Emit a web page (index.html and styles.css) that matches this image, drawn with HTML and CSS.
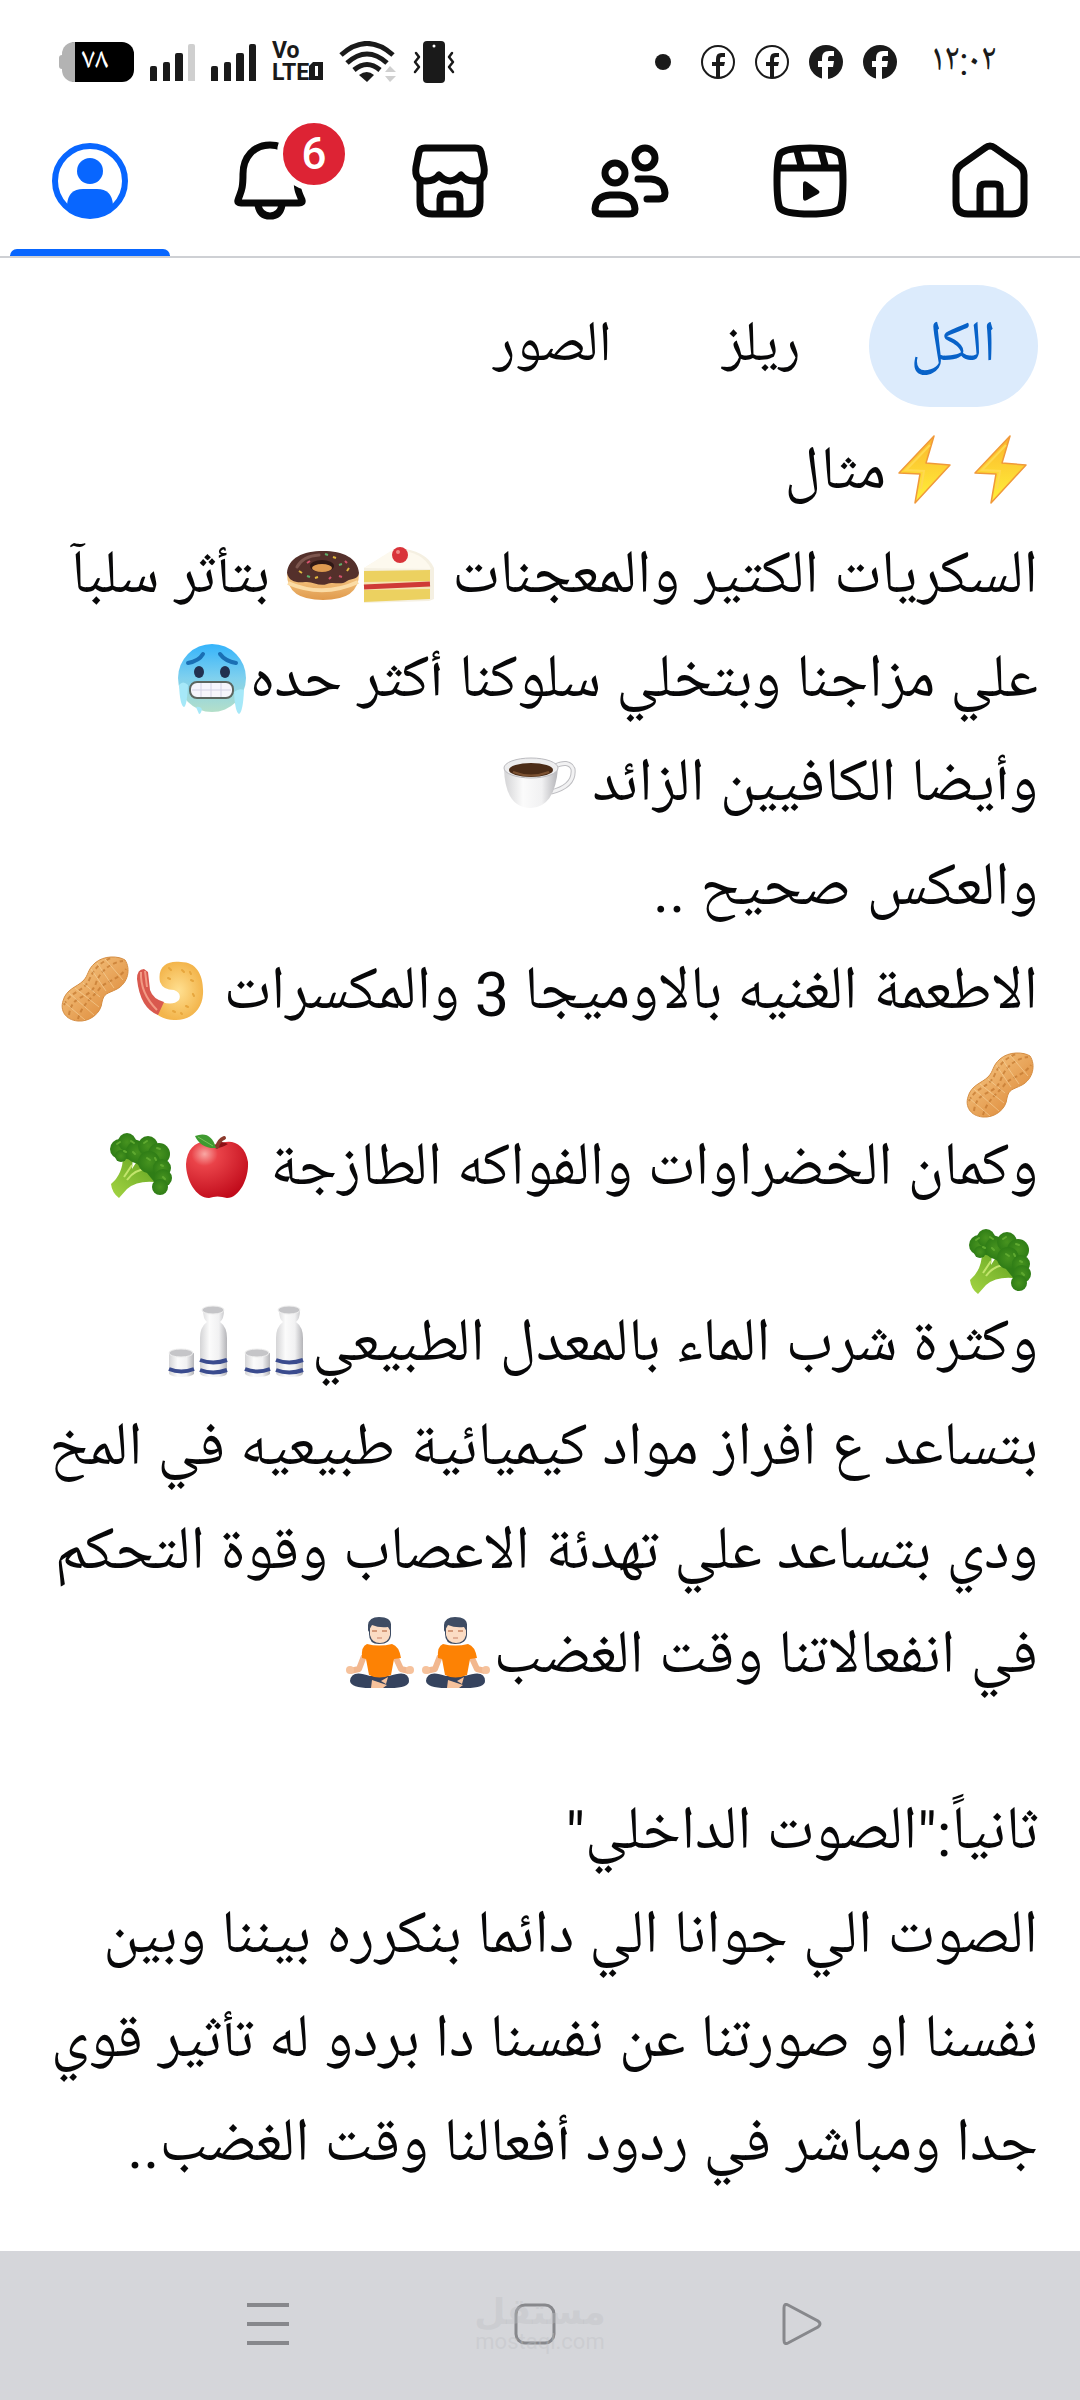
FILE: index.html
```
<!DOCTYPE html>
<html lang="ar" dir="rtl">
<head>
  <meta charset="UTF-8">
  <meta name="viewport" content="width=device-width, initial-scale=1.0">
  <title>الصفحة الشخصية</title>
  <link rel="stylesheet" href="styles.css">
</head>
<body>
  <!-- Emoji drawings shared by the post lines -->
  <svg class="defs" width="0" height="0" aria-hidden="true">
    <defs>
      <linearGradient id="boltFill" x1="0" y1="0" x2="0" y2="1">
        <stop offset="0" stop-color="#fbb52c"/>
        <stop offset="1" stop-color="#fff23a"/>
      </linearGradient>
      <linearGradient id="doughFill" x1="0" y1="0" x2="0" y2="1">
        <stop offset="0" stop-color="#f6c987"/>
        <stop offset="1" stop-color="#e09a4c"/>
      </linearGradient>
      <linearGradient id="coldFill" x1="0" y1="0" x2="0" y2="1">
        <stop offset="0" stop-color="#35b4fb"/>
        <stop offset="0.5" stop-color="#7fd0ee"/>
        <stop offset="1" stop-color="#b4dfc9"/>
      </linearGradient>
      <linearGradient id="whiteFill" x1="0" y1="0" x2="1" y2="0">
        <stop offset="0" stop-color="#d4d4d6"/>
        <stop offset="0.35" stop-color="#fbfbfb"/>
        <stop offset="0.7" stop-color="#f1f1f2"/>
        <stop offset="1" stop-color="#b4b4b8"/>
      </linearGradient>
      <linearGradient id="nutFill" x1="0" y1="0" x2="1" y2="1">
        <stop offset="0" stop-color="#f9cf8e"/>
        <stop offset="1" stop-color="#d97f2c"/>
      </linearGradient>
      <radialGradient id="appleFill" cx="0.3" cy="0.22" r="0.85">
        <stop offset="0" stop-color="#f9a8a4"/>
        <stop offset="0.25" stop-color="#ea4349"/>
        <stop offset="1" stop-color="#c00a1a"/>
      </radialGradient>
      <linearGradient id="stemFill" x1="1" y1="0" x2="0" y2="1">
        <stop offset="0" stop-color="#5c9f1d"/>
        <stop offset="1" stop-color="#a5d544"/>
      </linearGradient>
      <radialGradient id="leafFill">
        <stop offset="0" stop-color="#47931f"/>
        <stop offset="1" stop-color="#2f7d16"/>
      </radialGradient>
      <radialGradient id="shrimpFill">
        <stop offset="0" stop-color="#ffe091"/>
        <stop offset="1" stop-color="#f3b54c"/>
      </radialGradient>
    </defs>

    <symbol id="bolt" viewBox="0 0 76 76">
      <path d="M48 4 L13 41 L34 42 L29 71 L64 33 L40 31 Z" fill="url(#boltFill)" stroke="#f0993a" stroke-width="1.5" stroke-linejoin="round"/>
      <path d="M44 13 L20 38 L38 39 L35 57" fill="none" stroke="#ffd94f" stroke-width="2"/>
    </symbol>

    <symbol id="cake" viewBox="0 0 76 76">
      <path d="M3 32 L36 12 Q65 14 73 32 L73 63 L68 65 L3 67 Z" fill="#f5f0e2"/>
      <path d="M3 32 L33 13 Q63 16 70 33 Z" fill="#fdf9ee"/>
      <path d="M3 35 L69 34 L69 63 L3 66 Z" fill="#ecd160"/>
      <path d="M3 46 L69 45 L69 53 L3 54 Z" fill="#f5e4b4"/>
      <path d="M3 51 L69 48" stroke="#cf3a36" stroke-width="5"/>
      <circle cx="39" cy="19" r="8" fill="#d9343a"/>
      <circle cx="37" cy="16" r="2" fill="#f08a86"/>
    </symbol>

    <symbol id="donut" viewBox="0 0 76 76">
      <path d="M2 38 Q2 64 38 64 Q74 64 74 38 Z" fill="url(#doughFill)"/>
      <path d="M3 47 Q38 62 73 46" fill="none" stroke="#fbdca6" stroke-width="4"/>
      <path d="M2 37 C3 22 18 15 38 15 C58 15 73 22 74 37 C73 44 67 42 62 45 C55 50 49 45 42 48 C34 51 28 45 20 46 C12 47 4 46 2 37 Z" fill="#54302b"/>
      <ellipse cx="37" cy="30" rx="12" ry="6" fill="#2f1815"/>
      <ellipse cx="37" cy="32" rx="10" ry="4" fill="#dd9a50"/>
      <path d="M12 31 Q18 20 34 19" fill="none" stroke="#7d564e" stroke-width="3" stroke-linecap="round"/>
      <path d="M14 35l3 2M30 42l3 -1M48 21l3 1M64 32l-2 3" stroke="#e2b63d" stroke-width="2"/>
      <path d="M22 27l3 -2M54 40l3 1M44 43l2 -2M60 25l2 2" stroke="#d4526c" stroke-width="2"/>
      <path d="M22 40l3 1M54 29l3 -1M40 18l3 1" stroke="#5fae6a" stroke-width="2"/>
    </symbol>

    <symbol id="cold" viewBox="0 0 76 76">
      <circle cx="38" cy="38" r="34" fill="url(#coldFill)"/>
      <path d="M14 23 Q25 21 29 14M62 23 Q51 21 46 14" fill="none" stroke="#1a6fb4" stroke-width="4" stroke-linecap="round"/>
      <ellipse cx="25" cy="32" rx="5" ry="6" fill="#22304f"/>
      <ellipse cx="51" cy="32" rx="5" ry="6" fill="#22304f"/>
      <rect x="16" y="42" width="43" height="16" rx="7" fill="#f6f5fc" stroke="#5c6660" stroke-width="2"/>
      <path d="M18 50 H57M27 43 V57M37 43 V57M47 43 V57" stroke="#d3d2e6"/>
      <path d="M5 45 Q9 40 14 45 Q13 66 10 67 Q6 66 5 45ZM60 52 Q65 48 70 50 Q69 72 65 74 Q61 72 60 52ZM22 67 Q26 66 28 69 Q27 74 25 74 Z" fill="#a6e8f8"/>
    </symbol>

    <symbol id="coffee" viewBox="0 0 76 76">
      <path d="M52 23 Q68 15 72 25 Q74 42 50 48" fill="none" stroke="#bdbdc1" stroke-width="5"/>
      <path d="M52 23 Q68 15 72 25 Q74 42 50 48" fill="none" stroke="#f2f2f3" stroke-width="3"/>
      <path d="M3 24 Q4 64 30 64 Q54 63 57 24 Z" fill="url(#whiteFill)"/>
      <ellipse cx="30" cy="24" rx="27" ry="10" fill="#ededee" stroke="#bcbcc0"/>
      <ellipse cx="30" cy="26" rx="22" ry="7" fill="#4b2c17"/>
      <path d="M12 28 Q30 35 48 28" fill="none" stroke="#7c5232" stroke-width="2"/>
    </symbol>

    <symbol id="shrimp" viewBox="0 0 76 76">
      <path d="M29 50 Q40 54 46 48 Q49 41 41 38 Q30 38 27 30 C24 14 35 8 48 10 C64 10 71 24 70 42 C69 60 55 69 41 68 Q30 68 21 60 Z" fill="url(#shrimpFill)"/>
      <path d="M4 27 Q4 17 11 17 L15 20 L17 38 Q20 47 31 50 L25 63 Q7 56 4 27 Z" fill="#d9594e"/>
      <path d="M8 20 Q7 41 24 58M12 19 L14 35" fill="none" stroke="#f29a84" stroke-width="2"/>
      <path d="M36 16l2 2M49 18l2 2M58 28l2 1M60 42l1 2M53 54l2 1M40 59l2 1M57 20l1 2M35 26l2 1M48 61l1 1" stroke="#e7a63d" stroke-width="2" stroke-linecap="round"/>
    </symbol>

    <symbol id="peanut" viewBox="0 0 76 76">
      <path d="M38 11 C47 3 62 4 68 8 C74 17 71 31 60 37 C50 42 47 41 45 50 C44 62 32 70 21 69 C8 68 3 58 6 49 C9 37 20 35 26 29 C32 23 30 18 38 11 Z" fill="url(#nutFill)" stroke="#d58d42"/>
      <path d="M12 63 C15 40 33 49 39 31 C44 17 56 10 66 9M21 67 C26 50 36 46 43 36 C51 28 61 28 69 17M7 53 C15 37 27 41 33 26 C38 15 46 9 54 6" fill="none" stroke="#c2762e" stroke-width="2" stroke-dasharray="4 3" opacity="0.7"/>
      <path d="M34 17 L49 39M40 11 L57 36M48 7 L66 28M26 31 L43 45M18 36 L42 55M12 41 L37 63M7 50 L28 68" stroke="#fbe0ae" opacity="0.5"/>
    </symbol>

    <symbol id="apple" viewBox="0 0 76 76">
      <path d="M38 19 C47 9 66 13 69 34 C70 51 60 70 48 70 Q38 67 30 70 C17 70 7 52 7 36 C8 14 27 8 38 19 Z" fill="url(#appleFill)"/>
      <path d="M31 18 Q38 23 49 16 Q42 12 38 16 Z" fill="#8e0f16"/>
      <path d="M38 19 Q40 12 45 10" fill="none" stroke="#8c3a2c" stroke-width="4" stroke-linecap="round"/>
      <path d="M16 8 Q32 2 37 20 Q22 21 16 8 Z" fill="#3f9a30"/>
      <path d="M19 9 L34 18" stroke="#79c05a"/>
    </symbol>

    <symbol id="broccoli" viewBox="0 0 76 76">
      <path d="M8 56 Q20 46 20 28 L30 28 L29 41 L36 30 L52 44 L58 55 Q36 51 24 61 L16 70 Q9 65 8 56 Z" fill="url(#stemFill)"/>
      <path d="M24 52 Q32 41 44 41M21 49 L29 37" fill="none" stroke="#c3e56d" stroke-width="2"/>
      <path d="M12 16 L28 10 L58 20 L66 50 L58 62 L48 50 L40 40 L28 32 L12 28 Z" fill="#2f7d16"/>
      <circle cx="17" cy="21" r="10" fill="url(#leafFill)"/>
      <circle cx="24" cy="14" r="9" fill="url(#leafFill)"/>
      <circle cx="18" cy="28" r="6" fill="url(#leafFill)"/>
      <circle cx="34" cy="24" r="11" fill="url(#leafFill)"/>
      <circle cx="45" cy="18" r="10" fill="url(#leafFill)"/>
      <circle cx="56" cy="26" r="11" fill="url(#leafFill)"/>
      <circle cx="46" cy="34" r="11" fill="url(#leafFill)"/>
      <circle cx="59" cy="40" r="9" fill="url(#leafFill)"/>
      <circle cx="60" cy="50" r="9" fill="url(#leafFill)"/>
      <circle cx="57" cy="59" r="8" fill="url(#leafFill)"/>
      <path d="M14 16l3 -2M28 13l3 2M41 15l3 -2M54 20l3 1M30 24l2 2M44 30l3 2M58 37l2 1M60 49l2 2M21 23l2 1M52 30l1 2" stroke="#5fa930" stroke-width="2" stroke-linecap="round"/>
    </symbol>

    <symbol id="sake" viewBox="0 0 76 76">
      <path d="M43 6 Q43 15 47 18 Q40 23 40 34 V69 Q40 73 53 73 Q67 73 67 69 V34 Q67 23 60 18 Q64 15 64 6 Z" fill="url(#whiteFill)"/>
      <ellipse cx="53" cy="6" rx="11" ry="4" fill="#c5c5c8" stroke="#eeeeee"/>
      <path d="M40 56 Q53 61 67 56M40 66 Q53 71 67 66" fill="none" stroke="#3a4b8e" stroke-width="4"/>
      <path d="M9 49 V70 Q12 73 21 73 Q31 73 34 70 V49 Z" fill="url(#whiteFill)"/>
      <ellipse cx="21" cy="49" rx="12" ry="4" fill="#c5c5c8" stroke="#eeeeee"/>
      <path d="M9 65 Q21 70 34 65" fill="none" stroke="#3a4b8e" stroke-width="4"/>
    </symbol>

    <symbol id="lotus" viewBox="0 0 76 76">
      <path d="M22 40 L17 53 L8 55M53 40 L59 53 L67 55" fill="none" stroke="#f2b78e" stroke-width="6" stroke-linejoin="round"/>
      <circle cx="8" cy="54" r="4" fill="#f6c29c"/>
      <circle cx="68" cy="54" r="4" fill="#f6c29c"/>
      <path d="M28 60 Q9 53 8 65 Q9 72 28 72 L48 72 Q67 72 67 65 Q67 53 47 60 Z" fill="#35435e"/>
      <path d="M30 64 L45 69 L41 72 L29 72 ZM39 65 L46 61 L44 68 Z" fill="#f6c29c"/>
      <path d="M25 28 Q37 31 50 28 Q57 30 59 42 L52 43 L49 59 Q37 64 27 59 L24 43 L20 42 Q19 30 25 28 Z" fill="#fd8204"/>
      <path d="M27 18 Q27 28 37 28 Q49 28 49 18 V8 H27 Z" fill="#3e4c63"/>
      <path d="M28 9 V19 Q30 27 38 27 Q46 27 48 19 V9 Z" fill="#fbdcc4"/>
      <path d="M26 16 V9 Q27 1 37 1 Q49 1 49 9 V16 L46 11 Q37 12 30 9 Z" fill="#3e4c63"/>
      <path d="M30 15 H35M40 15 H45" stroke="#d59b7b" stroke-width="2"/>
      <path d="M35 22 H40" stroke="#c98268"/>
    </symbol>
  </svg>

  <div class="status-bar">
    <div class="status-side notices">
      <span class="clock">١٢:٠٢</span>
      <svg width="34" height="34" viewBox="0 0 34 34" aria-label="Facebook"><circle cx="17" cy="17" r="17" fill="#1a1a1a"/><path d="M13 34 V22 H9 V16 H13 V13 Q13 6 20 6 H25 V11 H21 Q19 11 19 14 V16 H25 L24 22 H19 V34 Z" fill="#fff"/></svg>
      <svg width="34" height="34" viewBox="0 0 34 34" aria-label="Facebook"><circle cx="17" cy="17" r="17" fill="#1a1a1a"/><path d="M13 34 V22 H9 V16 H13 V13 Q13 6 20 6 H25 V11 H21 Q19 11 19 14 V16 H25 L24 22 H19 V34 Z" fill="#fff"/></svg>
      <svg width="34" height="34" viewBox="0 0 34 34" aria-label="Facebook"><circle cx="17" cy="17" r="16" fill="none" stroke="#1a1a1a" stroke-width="2"/><path d="M15 33 V21 H11 V17 H15 V14 Q15 8 20 8 H24 V12 H21 Q19 12 19 14 V17 H24 L23 21 H19 V33 Z" fill="#1a1a1a"/></svg>
      <svg width="34" height="34" viewBox="0 0 34 34" aria-label="Facebook"><circle cx="17" cy="17" r="16" fill="none" stroke="#1a1a1a" stroke-width="2"/><path d="M15 33 V21 H11 V17 H15 V14 Q15 8 20 8 H24 V12 H21 Q19 12 19 14 V17 H24 L23 21 H19 V33 Z" fill="#1a1a1a"/></svg>
      <span class="more-dot"></span>
    </div>
    <div class="status-side system">
      <svg width="42" height="42" viewBox="0 0 42 42" aria-label="Vibrate"><rect x="10" width="22" height="42" rx="4" fill="#1a1a1a"/><circle cx="21" cy="5" r="1.5" fill="#fff"/><path d="M3 12 L6 16 L2 21 L6 26 L2 31M39 12 L36 16 L40 21 L36 26 L40 31" fill="none" stroke="#1a1a1a" stroke-width="2.5" stroke-linecap="round" stroke-linejoin="round"/></svg>
      <svg width="58" height="42" viewBox="0 0 58 42" aria-label="Wi-Fi"><path d="M2 14 Q28 -9 54 14M8 22 Q28 4 48 22M15 29 Q28 18 41 29" fill="none" stroke="#1a1a1a" stroke-width="5"/><path d="M20 34 Q28 28 35 34 L28 41 Z" fill="#1a1a1a"/><path d="M46 31 L51 25 L57 31 ZM46 35 L51 41 L57 35 Z" fill="#cfcfcf"/></svg>
      <span class="volte" dir="ltr"><span>Vo</span><span>LTE<svg width="14" height="18" viewBox="0 0 14 18" aria-hidden="true"><path d="M4 0 H14 V18 H0 V4 Z" fill="#1a1a1a"/><path d="M6 4 H9 V14 H6 Z" fill="#fff"/></svg></span></span>
      <svg width="45" height="38" viewBox="0 0 45 38" aria-label="Signal 1"><path d="M0 25a2 2 0 0 1 2-2h3a2 2 0 0 1 2 2v13H0ZM13 21a2 2 0 0 1 2-2h3a2 2 0 0 1 2 2v17h-7ZM25 12a2 2 0 0 1 2-2h4a2 2 0 0 1 2 2v26h-8ZM38 3a2 2 0 0 1 2-2h3a2 2 0 0 1 2 2v35h-7Z" fill="#1a1a1a"/></svg>
      <svg width="45" height="38" viewBox="0 0 45 38" aria-label="Signal 2"><path d="M0 25a2 2 0 0 1 2-2h3a2 2 0 0 1 2 2v13H0ZM13 21a2 2 0 0 1 2-2h3a2 2 0 0 1 2 2v17h-7ZM25 12a2 2 0 0 1 2-2h4a2 2 0 0 1 2 2v26h-8Z" fill="#1a1a1a"/><path d="M38 3a2 2 0 0 1 2-2h3a2 2 0 0 1 2 2v35h-7Z" fill="#cfcfcf"/></svg>
      <span class="battery">٧٨</span>
    </div>
  </div>

  <nav class="tabs">
    <a href="#home" class="tab" aria-label="الرئيسية">
      <svg width="80" height="80" viewBox="0 0 80 80" fill="none" stroke="#080808" stroke-width="7" stroke-linejoin="round"><path d="M35 8 Q40 4 45 8 L69 25 Q74 29 74 35 V62 Q74 74 62 74 H18 Q6 74 6 62 V35 Q6 29 11 25 Z"/><path d="M30 74 V49 Q30 44 35 44 H45 Q50 44 50 49 V74"/></svg>
    </a>
    <a href="#reels" class="tab" aria-label="ريلز">
      <svg width="80" height="80" viewBox="0 0 80 80" fill="none" stroke="#080808" stroke-width="7"><path d="M7 40 Q7 20 10 14 Q15 8 40 8 Q65 8 70 14 Q73 20 73 40 Q73 62 70 68 Q65 74 40 74 Q15 74 10 68 Q7 62 7 40 Z"/><path d="M6 28 H74M26 7 L32 29M50 7 L56 29"/><path d="M33 44 V58 Q33 62 37 60 L48 54 Q51 52 48 50 L37 42 Q33 40 33 44 Z" fill="#080808" stroke="none"/></svg>
    </a>
    <a href="#friends" class="tab" aria-label="الأصدقاء">
      <svg width="80" height="80" viewBox="0 0 80 80" fill="none" stroke="#080808" stroke-width="7" stroke-linecap="round"><circle cx="25" cy="33" r="10"/><circle cx="55" cy="18" r="10"/><path d="M20 55 H30 Q44 56 45 69 Q45 74 39 74 H11 Q5 74 5 69 Q6 56 20 55 Z"/><path d="M48 39 H61 Q74 40 75 53 Q75 59 69 59 H57"/></svg>
    </a>
    <a href="#market" class="tab" aria-label="المتجر">
      <svg width="80" height="80" viewBox="0 0 80 80" fill="none" stroke="#080808" stroke-width="7" stroke-linejoin="round"><path d="M15 8 H65 Q70 8 71 12 L74 27 Q76 41 64 41 Q55 41 51 35 Q47 40 40 41 Q33 40 29 35 Q25 41 16 41 Q4 41 6 27 L9 12 Q10 8 15 8 Z"/><path d="M10 40 V62 Q10 74 22 74 H58 Q70 74 70 62 V40"/><path d="M30 74 V59 Q30 54 35 54 H45 Q50 54 50 59 V74"/></svg>
    </a>
    <a href="#notifications" class="tab" aria-label="الإشعارات">
      <span class="bell">
        <svg width="80" height="80" viewBox="0 0 80 80" fill="none" stroke="#080808" stroke-width="7" stroke-linejoin="round"><path d="M40 5 C24 5 13 17 13 34 C13 50 11 51 8 60 Q7 63 11 63 H69 Q73 63 72 60 C68 51 67 50 67 34 C67 17 56 5 40 5 Z"/><path d="M28 65 Q30 76 40 76 Q50 76 52 65"/></svg>
        <span class="badge">6</span>
      </span>
    </a>
    <a href="#profile" class="tab active" aria-label="الملف الشخصي">
      <svg width="80" height="80" viewBox="0 0 80 80"><circle cx="40" cy="41" r="35" fill="none" stroke="#0866ff" stroke-width="6"/><circle cx="40" cy="31" r="13" fill="#0866ff"/><path d="M17 65 Q18 49 33 49 H47 Q62 49 63 65 Q54 76 40 76 Q26 76 17 65 Z" fill="#0866ff"/></svg>
    </a>
  </nav>

  <main>
    <div class="filters">
      <button class="filter selected">الكل</button>
      <button class="filter">ريلز</button>
      <button class="filter">الصور</button>
    </div>

    <article class="post">
      <p><svg class="emoji" role="img" aria-label="⚡"><use href="#bolt"/></svg><svg class="emoji" role="img" aria-label="⚡"><use href="#bolt"/></svg>مثال</p>
      <p>السكريات الكتير والمعجنات <svg class="emoji" role="img" aria-label="🍰"><use href="#cake"/></svg><svg class="emoji" role="img" aria-label="🍩"><use href="#donut"/></svg> بتأثر سلبآ</p>
      <p>علي مزاجنا وبتخلي سلوكنا أكثر حده<svg class="emoji" role="img" aria-label="🥶"><use href="#cold"/></svg></p>
      <p>وأيضا الكافيين الزائد <svg class="emoji" role="img" aria-label="☕"><use href="#coffee"/></svg></p>
      <p>والعكس صحيح ..</p>
      <p>الاطعمة الغنيه بالاوميجا 3 والمكسرات <svg class="emoji" role="img" aria-label="🍤"><use href="#shrimp"/></svg><svg class="emoji" role="img" aria-label="🥜"><use href="#peanut"/></svg></p>
      <p class="short"><svg class="emoji" role="img" aria-label="🥜"><use href="#peanut"/></svg></p>
      <p>وكمان الخضراوات والفواكه الطازجة <svg class="emoji" role="img" aria-label="🍎"><use href="#apple"/></svg><svg class="emoji" role="img" aria-label="🥦"><use href="#broccoli"/></svg></p>
      <p class="short"><svg class="emoji" role="img" aria-label="🥦"><use href="#broccoli"/></svg></p>
      <p>وكثرة شرب الماء بالمعدل الطبيعي<svg class="emoji" role="img" aria-label="🍶"><use href="#sake"/></svg><svg class="emoji" role="img" aria-label="🍶"><use href="#sake"/></svg></p>
      <p>بتساعد ع افراز مواد كيميائية طبيعيه في المخ</p>
      <p>ودي بتساعد علي تهدئة الاعصاب وقوة التحكم</p>
      <p>في انفعالاتنا وقت الغضب<svg class="emoji" role="img" aria-label="🧘"><use href="#lotus"/></svg><svg class="emoji" role="img" aria-label="🧘"><use href="#lotus"/></svg></p>
      <p class="section">ثانياً:"الصوت الداخلي"</p>
      <p>الصوت الي جوانا الي دائما بنكرره بيننا وبين</p>
      <p>نفسنا او صورتنا عن نفسنا دا بردو له تأثير قوي</p>
      <p>جدا ومباشر في ردود أفعالنا وقت الغضب..</p>
    </article>
  </main>

  <footer class="system-nav">
    <button aria-label="رجوع"><svg width="42" height="42" viewBox="0 0 42 42"><path d="M3 5 Q3 0 7 2 L37 18 Q41 21 37 24 L7 40 Q3 42 3 37 Z" fill="none" stroke="#87888c" stroke-width="3"/></svg></button>
    <button aria-label="الشاشة الرئيسية"><svg width="42" height="42" viewBox="0 0 42 42"><rect x="2" y="2" width="38" height="38" rx="9" fill="none" stroke="#87888c" stroke-width="3"/></svg></button>
    <button aria-label="التطبيقات الأخيرة"><svg width="42" height="42" viewBox="0 0 42 42"><path d="M0 2 H42M0 21 H42M0 40 H42" stroke="#87888c" stroke-width="4"/></svg></button>
    <div class="watermark"><span class="watermark-name">مستقل</span><span>mostaql.com</span></div>
  </footer>
</body>
</html>
```

FILE: styles.css
```
* {
  box-sizing: border-box;
}

body {
  margin: 0;
  min-height: 100vh;
  display: flex;
  flex-direction: column;
  background-color: #fff;
  color: #080809;
  font-family: Roboto, "Noto Naskh Arabic UI", "Noto Naskh Arabic", "Noto Sans Arabic", "DejaVu Sans", sans-serif;
}

.defs {
  position: absolute;
}

/* Status bar */
.status-bar {
  display: flex;
  justify-content: space-between;
  align-items: center;
  height: 104px;
  padding: 20px 84px 0 62px;
  color: #1a1a1a;
}

.status-side {
  display: flex;
  align-items: center;
}

.notices {
  gap: 20px;
}

.system {
  gap: 16px;
}

.clock {
  margin-left: 14px;
  font-size: 38px;
  line-height: 40px;
}

.more-dot {
  width: 16px;
  height: 16px;
  margin-right: 10px;
  border-radius: 50%;
  background-color: #1a1a1a;
}

.volte {
  display: flex;
  flex-direction: column;
  font-size: 23px;
  font-weight: bold;
  line-height: 22px;
}

.battery {
  position: relative;
  width: 72px;
  height: 40px;
  padding-right: 26px;
  border-left: 13px solid #b3b3b3;
  border-radius: 12px;
  background-color: #000;
  color: #fff;
  font-size: 30px;
  line-height: 40px;
}

.battery::before {
  content: "";
  position: absolute;
  top: 13px;
  left: -16px;
  width: 4px;
  height: 14px;
  border-radius: 3px 0 0 3px;
  background-color: #b3b3b3;
}

/* Tabs */
.tabs {
  display: grid;
  grid-template-columns: repeat(6, 1fr);
  height: 154px;
  border-bottom: 2px solid #ced0d4;
}

.tab {
  position: relative;
  display: flex;
  align-items: center;
  justify-content: center;
}

.tab svg {
  display: block;
}

.tab.active::after {
  content: "";
  position: absolute;
  right: 10px;
  bottom: 0;
  left: 10px;
  height: 7px;
  border-radius: 7px 7px 0 0;
  background-color: #0866ff;
}

.bell {
  position: relative;
}

.badge {
  position: absolute;
  top: -23px;
  left: 47px;
  width: 74px;
  height: 74px;
  border: 6px solid #fff;
  border-radius: 50%;
  background-color: #dd2334;
  color: #fff;
  font-size: 44px;
  font-weight: 500;
  line-height: 62px;
  text-align: center;
}

/* Filters */
main {
  flex: 1;
  padding: 27px 42px 0;
}

.filters {
  display: flex;
  gap: 26px;
}

.filter {
  height: 122px;
  padding: 0 42px;
  border: none;
  border-radius: 61px;
  background: none;
  color: inherit;
  font-family: inherit;
  font-size: 57px;
}

.filter.selected {
  background-color: #dcebfc;
  color: #0862c8;
}

/* Post */
.post {
  margin-top: 16px;
  font-size: 61px;
  line-height: 104px;
}

.post p {
  height: 104px;
  margin: 0;
  white-space: nowrap;
}

.post .short {
  height: 72px;
  line-height: 72px;
}

.post .section {
  margin-top: 72px;
}

.emoji {
  width: 76px;
  height: 76px;
  margin: -4px 0;
  vertical-align: -8px;
}

.short .emoji {
  vertical-align: -16px;
}

/* System navigation */
.system-nav {
  position: relative;
  display: grid;
  grid-template-columns: repeat(3, 1fr);
  height: 149px;
  padding: 0 144px 0 134px;
  background-color: #d5d6da;
}

.system-nav button {
  padding: 0;
  border: none;
  background: none;
}

.watermark {
  position: absolute;
  right: 0;
  bottom: 46px;
  left: 0;
  display: flex;
  flex-direction: column;
  align-items: center;
  color: rgba(190, 192, 196, 0.4);
  font-size: 22px;
  line-height: 24px;
  pointer-events: none;
}

.watermark-name {
  font-family: "DejaVu Sans", sans-serif;
  font-size: 36px;
  font-weight: bold;
  line-height: 36px;
}
```
